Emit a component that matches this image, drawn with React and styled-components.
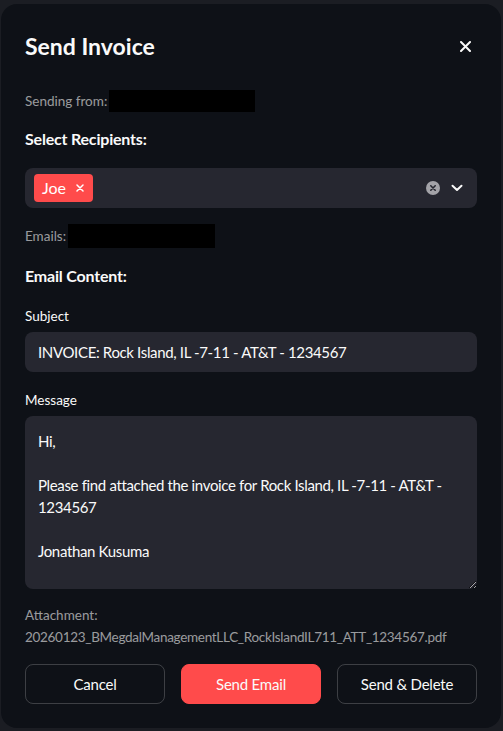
import React from "react";
import styled, { createGlobalStyle } from "styled-components";

const GlobalStyle = createGlobalStyle`
  html, body {
    margin: 0;
    padding: 0;
    background: #1b1d23;
    color-scheme: dark;
  }
  body {
    font-family: Lato, "Noto Sans", sans-serif;
  }
`;

const Overlay = styled.div`
  width: 503px;
  height: 731px;
  padding: 4px 2px 3px 1px;
  box-sizing: border-box;
`;

const Dialog = styled.div`
  height: 100%;
  background: #0e1117;
  border-radius: 16px;
  padding: 28px 24px 24px 24px;
  box-sizing: border-box;
  color: #fafafa;
  display: flex;
  flex-direction: column;
`;

const Header = styled.div`
  display: flex;
  align-items: center;
  justify-content: space-between;
  height: 28px;
  margin-bottom: 30px;
`;

const Title = styled.h2`
  margin: 0;
  font-size: 23px;
  font-weight: 700;
  color: #fafafa;
`;

const CloseButton = styled.button`
  background: none;
  border: none;
  padding: 0;
  margin-right: 6px;
  display: flex;
  color: #fafafa;
`;

const Caption = styled.div`
  font-size: 13.5px;
  letter-spacing: ${(p) => (p.$tight ? "-0.3px" : "0")};
  color: rgba(250, 250, 250, 0.6);
  display: flex;
  align-items: center;
  line-height: 22px;
  margin-bottom: ${(p) => p.$mb || 0}px;
`;

const Redacted = styled.span`
  display: inline-block;
  background: #000;
  width: ${(p) => p.$w}px;
  height: ${(p) => p.$h}px;
  margin-left: 2px;
`;

const Heading = styled.div`
  font-size: 16px;
  font-weight: 700;
  line-height: 24px;
  letter-spacing: -0.2px;
  margin-bottom: ${(p) => p.$mb || 0}px;
`;

const Label = styled.div`
  font-size: 13.5px;
  line-height: 20px;
  margin-bottom: 6px;
`;

const Select = styled.div`
  height: 40px;
  background: #262730;
  border-radius: 8px;
  display: flex;
  align-items: center;
  padding: 0 14px 0 9px;
  margin-bottom: 16px;
`;

const Tag = styled.span`
  background: #ff4b4b;
  color: #fff;
  border-radius: 4px;
  height: 28px;
  display: flex;
  align-items: center;
  gap: 10px;
  padding: 0 9px 0 8px;
  font-size: 16px;
`;

const SelectIcons = styled.div`
  margin-left: auto;
  display: flex;
  align-items: center;
  gap: 11px;
`;

const Input = styled.div`
  height: 40px;
  background: #262730;
  border-radius: 8px;
  display: flex;
  align-items: center;
  padding: 0 13px;
  font-size: 15px;
  letter-spacing: -0.35px;
  margin-bottom: 18px;
`;

const TextArea = styled.textarea`
  height: 174px;
  box-sizing: border-box;
  background: #262730;
  border: none;
  border-radius: 8px;
  padding: 14px 13px;
  font-family: inherit;
  font-size: 15px;
  letter-spacing: -0.35px;
  line-height: 22px;
  color: #fafafa;
  resize: vertical;
  outline: none;
  margin-bottom: 15px;
`;

const Buttons = styled.div`
  display: grid;
  grid-template-columns: repeat(3, 1fr);
  gap: 16px;
  margin-top: 16px;
`;

const Button = styled.button`
  height: 40px;
  border-radius: 8px;
  font-family: inherit;
  font-size: 15px;
  letter-spacing: -0.2px;
  color: #fafafa;
  background: ${(p) => (p.$primary ? "#ff4b4b" : "transparent")};
  border: 1px solid ${(p) => (p.$primary ? "#ff4b4b" : "rgba(250, 250, 250, 0.2)")};
`;

const message = `Hi,

Please find attached the invoice for Rock Island, IL -7-11 - AT&T - 1234567

Jonathan Kusuma`;

export default function App() {
  return (
    <Overlay>
      <GlobalStyle />
      <Dialog>
        <Header>
          <Title>Send Invoice</Title>
          <CloseButton>
            <svg width="11" height="11" viewBox="0 0 11 11">
              <path d="M1 1L10 10M10 1L1 10" stroke="#fafafa" strokeWidth="2" strokeLinecap="round" />
            </svg>
          </CloseButton>
        </Header>

        <Caption $mb={15}>
          Sending from:<Redacted $w={146} $h={22} />
        </Caption>

        <Heading $mb={17}>Select Recipients:</Heading>
        <Select>
          <Tag>
            Joe
            <svg width="8" height="8" viewBox="0 0 8 8">
              <path d="M1 1L7 7M7 1L1 7" stroke="#fff" strokeWidth="1.5" strokeLinecap="round" />
            </svg>
          </Tag>
          <SelectIcons>
            <svg width="14" height="14" viewBox="0 0 14 14">
              <circle cx="7" cy="7" r="7" fill="#a3a3a8" />
              <path d="M4.8 4.8L9.2 9.2M9.2 4.8L4.8 9.2" stroke="#262730" strokeWidth="1.6" strokeLinecap="round" />
            </svg>
            <svg width="12" height="8" viewBox="0 0 12 8">
              <path d="M1.5 1.8L6 6L10.5 1.8" stroke="#fafafa" strokeWidth="2" fill="none" strokeLinecap="round" strokeLinejoin="round" />
            </svg>
          </SelectIcons>
        </Select>

        <Caption $mb={16}>
          Emails:<Redacted $w={147} $h={24} />
        </Caption>

        <Heading $mb={18}>Email Content:</Heading>

        <Label>Subject</Label>
        <Input>INVOICE: Rock Island, IL -7-11 - AT&amp;T - 1234567</Input>

        <Label>Message</Label>
        <TextArea readOnly defaultValue={message} />

        <Caption>Attachment:</Caption>
        <Caption $tight>20260123_BMegdalManagementLLC_RockIslandIL711_ATT_1234567.pdf</Caption>

        <Buttons>
          <Button>Cancel</Button>
          <Button $primary>Send Email</Button>
          <Button>Send &amp; Delete</Button>
        </Buttons>
      </Dialog>
    </Overlay>
  );
}
